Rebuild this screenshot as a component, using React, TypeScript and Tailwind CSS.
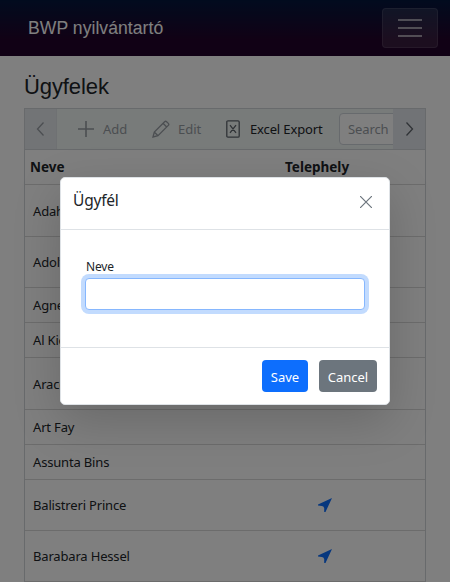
import type { ReactNode } from "react";

type Row = { name: string; height: string; located?: boolean };

const rows: Row[] = [
  { name: "Adah Kuhn", height: "h-[52px]" },
  { name: "Adolf Mayer", height: "h-[51px]" },
  { name: "Agnes Toth", height: "h-[35px]" },
  { name: "Al Kiehn", height: "h-[35px]" },
  { name: "Araceli Koss", height: "h-[52px]" },
  { name: "Art Fay", height: "h-[35px]" },
  { name: "Assunta Bins", height: "h-[35px]" },
  { name: "Balistreri Prince", height: "h-[51px]", located: true },
  { name: "Barabara Hessel", height: "h-[51px]", located: true },
];

function Stroke({
  children,
  width,
  height = width,
  className = "",
}: {
  children: ReactNode;
  width: number;
  height?: number;
  className?: string;
}) {
  return (
    <svg
      width={width}
      height={height}
      viewBox={`0 0 ${width} ${height}`}
      fill="none"
      stroke="currentColor"
      strokeWidth="1.3"
      className={`shrink-0 ${className}`}
    >
      {children}
    </svg>
  );
}

function Navbar() {
  return (
    <header className="h-14 bg-[linear-gradient(180deg,rgb(5,39,103)_0%,#3a0647_70%)]">
      <div className="flex h-full items-center justify-between bg-black/40 pr-3 pl-7">
        <span className="font-['Liberation_Sans',Arial,sans-serif] text-[17.6px] leading-7 tracking-[0.04px] text-white">
          BWP nyilvántartó
        </span>
        <button className="flex h-10 w-14 flex-col items-center justify-center gap-1.5 rounded-[4px] border border-white/10 bg-white/10">
          <span className="h-0.5 w-6 bg-white/55" />
          <span className="h-0.5 w-6 bg-white/55" />
          <span className="h-0.5 w-6 bg-white/55" />
        </button>
      </div>
    </header>
  );
}

function Toolbar() {
  return (
    <div className="flex h-[41px] border-b border-[#d0d4d8] bg-[#f1f6f5] text-[13px] text-[#212529]">
      <div className="flex w-8 shrink-0 items-center justify-center border-r border-[#dee2e6] bg-[#e4e8ed] text-[#979da3]">
        <Stroke width={16}><path d="M10.5 1.5 4.5 8l6 6.5" /></Stroke>
      </div>
      <div className="flex min-w-0 flex-1 items-center overflow-hidden whitespace-nowrap">
        <div className="ml-5 flex w-[75px] shrink-0 items-center gap-2 text-[#979da3]">
          <Stroke width={18}><path d="M9 1v16M1 9h16" strokeWidth="1.6" /></Stroke>
          <span className="pt-px">Add</span>
        </div>
        <div className="flex w-[73px] shrink-0 items-center gap-2 text-[#979da3]">
          <Stroke width={18}>
            <path d="m1 17 1.3-5L12.6 1.7q1-1 2 0l1.7 1.7q1 1 0 2L6 15.7 1 17Zm1.3-5L6 15.7M11 3.3 14.7 7" />
          </Stroke>
          <span className="pt-px">Edit</span>
        </div>
        <div className="flex w-[114px] shrink-0 items-center gap-[9px]">
          <Stroke width={16} height={18} className="text-[#5f666d]">
            <path d="M3 .8h10q1.2 0 1.2 1.2v14q0 1.2-1.2 1.2H3q-1.2 0-1.2-1.2V2Q1.8.8 3 .8ZM5 5.2l6 7.6M11 5.2l-6 7.6" />
          </Stroke>
          <span className="pt-px tracking-[-0.14px]">Excel Export</span>
        </div>
        <div className="flex h-8 w-40 shrink-0 items-center rounded-[4px] border border-[#ced4da] bg-white pt-px pl-2 tracking-[-0.1px] text-[#979da3]">
          Search
        </div>
      </div>
      <div className="flex w-8 shrink-0 items-center justify-center bg-[#e3e6ec] text-[#5f666d]">
        <Stroke width={16}><path d="m5.5 1.5 6 6.5-6 6.5" /></Stroke>
      </div>
    </div>
  );
}

function CustomerGrid() {
  return (
    <section className="border border-[#d0d4d8]">
      <Toolbar />
      <div className="flex h-[35px] items-center border-b border-[#d8d8d8] pt-px pl-[5px] text-[13.5px] font-bold text-[#212529]">
        <span className="w-[255px]">Neve</span>
        <span>Telephely</span>
      </div>
      {rows.map((row) => (
        <div key={row.name} className={`flex items-center border-b border-[#d8d8d8] pl-2 ${row.height}`}>
          <span className="w-[285px] pt-0.5 tracking-[-0.17px]">{row.name}</span>
          {row.located && (
            <svg width="14" height="14" viewBox="0 0 14 14" fill="#0d6efd">
              <path d="M14 0 7.5 14H6.2V10Q5.6 8.2 3.8 8L0 7.4V6.6Z" />
            </svg>
          )}
        </div>
      ))}
    </section>
  );
}

function CustomerDialog() {
  return (
    <div className="flex h-[228px] w-[330px] flex-col rounded-[5px] border border-[#dee2e6] bg-white shadow-[0_16px_48px_rgba(0,0,0,0.175)]">
      <div className="flex h-[52px] items-start justify-between border-b border-[#dee2e6] pt-2.5 pr-[17px] pl-3">
        <h2 className="text-[15.5px] leading-6 tracking-[-0.2px] text-[#212529]">Ügyfél</h2>
        <Stroke width={12} className="mt-2 text-[#6c757d]"><path d="m0 0 12 12M12 0 0 12" strokeWidth="1.2" /></Stroke>
      </div>
      <div className="h-[118px] border-b border-[#dee2e6] px-6 pt-7">
        <label className="block pl-px text-[12px] leading-[18px] tracking-[-0.2px] text-[#212529]">Neve</label>
        <input className="mt-0.5 block h-8 w-[280px] rounded-[4px] border border-[#86b7fe] bg-white shadow-[0_0_0_4px_#c2dbfe] outline-none" />
      </div>
      <div className="flex flex-1 items-center justify-end gap-[11px] pr-3 text-[13px] text-white">
        <button className="h-8 w-[46px] rounded-[4px] bg-[#0d6efd] pt-[3px]">Save</button>
        <button className="h-8 w-[58px] rounded-[4px] bg-[#6c757d] pt-[3px]">Cancel</button>
      </div>
    </div>
  );
}

export default function App() {
  return (
    <div className="relative h-[582px] w-[450px] overflow-hidden bg-white font-['Noto_Sans','Open_Sans',sans-serif] text-[13px] text-[#212529]">
      <Navbar />
      <main className="px-6 pt-[17px]">
        <h1 className="mb-[7px] font-['Liberation_Sans',Arial,sans-serif] text-[22px] leading-7 tracking-[-0.1px]">Ügyfelek</h1>
        <CustomerGrid />
      </main>
      <div className="absolute inset-0 flex items-start justify-center bg-black/50 pt-[177px]">
        <CustomerDialog />
      </div>
    </div>
  );
}
